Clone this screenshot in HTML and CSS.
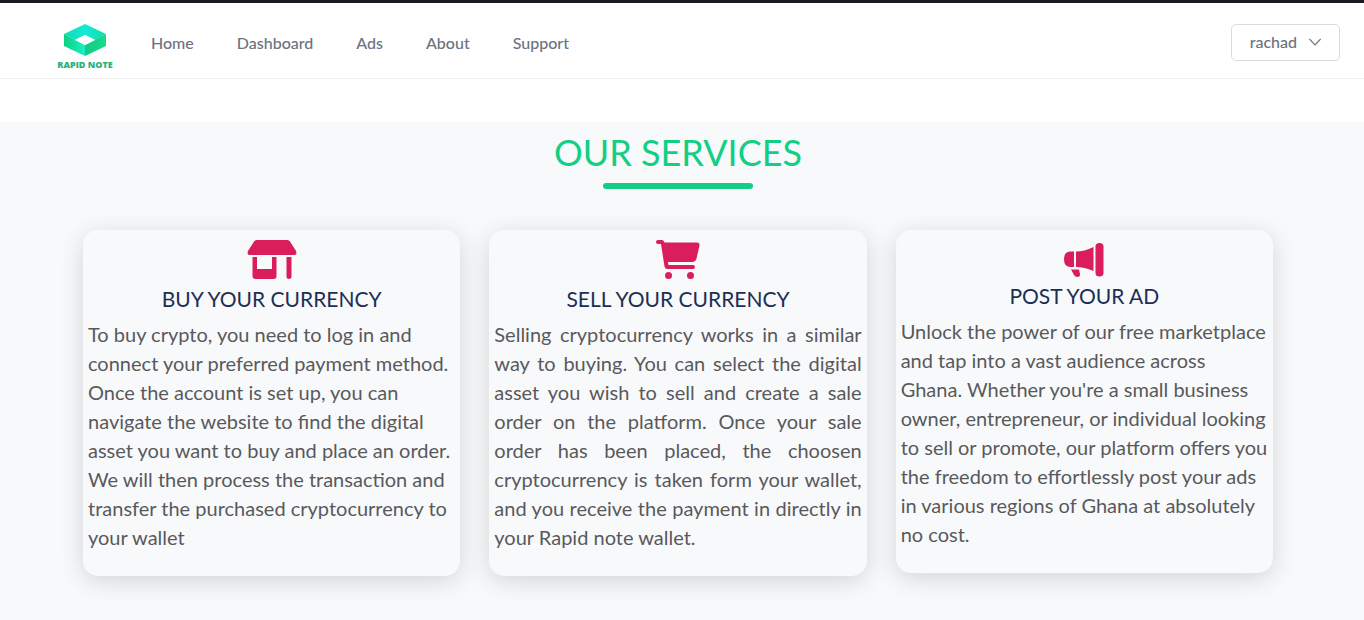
FILE: index.html
```html
<!DOCTYPE html>
<html lang="en">
<head>
<meta charset="utf-8">
<meta name="viewport" content="width=device-width, initial-scale=1">
<title>Rapid Note</title>
<link rel="stylesheet" href="styles.css">
</head>
<body>
<header class="nav">
  <a class="logo" href="#">
    <svg class="logo-mark" viewBox="0 0 42 32" aria-hidden="true">
      <defs>
        <linearGradient id="top" x1="0" y1="0" x2="1" y2="0"><stop offset="0" stop-color="#12dcb4"/><stop offset=".5" stop-color="#12ead8"/><stop offset="1" stop-color="#14dca8"/></linearGradient>
        <linearGradient id="left" x1="0" y1="0" x2="1" y2="0"><stop offset="0" stop-color="#0bd27e"/><stop offset="1" stop-color="#19f0c4"/></linearGradient>
        <linearGradient id="right" x1="0" y1="0" x2="1" y2="0"><stop offset="0" stop-color="#10c98a"/><stop offset="1" stop-color="#1bdc86"/></linearGradient>
      </defs>
      <path fill="url(#top)" d="M21 0 42 10 31 16 21 11 11 16 0 10Z"/>
      <path fill="url(#left)" d="M0 10 21 21V32L0 22Z"/>
      <path fill="url(#right)" d="M42 10 21 21V32L42 22Z"/>
      <path fill="#fff" d="M21 11 31 16 21 21 11 16Z"/>
    </svg>
    <span class="logo-name">RAPID NOTE</span>
  </a>
  <nav class="links">
    <a href="#">Home</a>
    <a href="#">Dashboard</a>
    <a href="#">Ads</a>
    <a href="#">About</a>
    <a href="#">Support</a>
  </nav>
  <button class="user" type="button">rachad
    <svg class="chevron" viewBox="0 0 12 8" aria-hidden="true"><path d="M.3 1 6 7 11.700 1" fill="none" stroke="currentColor" stroke-width="1.200"/></svg>
  </button>
</header>
<main class="services">
  <h1 class="title">OUR SERVICES</h1>
  <div class="cards">
    <article class="card">
      <svg class="icon" viewBox="0 0 50 40" aria-hidden="true"><path d="M9.500 0H40.500Q42 0 43 1.500L49 11Q50.500 15 46.500 15H3.500Q-.5 15 1 11L7 1.500Q8 0 9.500 0ZM5.500 17H10V29H25V17H29.500V36Q29.500 39 26.500 39H8.500Q5.500 39 5.500 36ZM39.500 17H44.500V37Q44.500 39 42 39T39.500 37Z"/></svg>
      <h2 class="card-title">BUY YOUR CURRENCY</h2>
      <p class="text">To buy crypto, you need to log in and connect your preferred payment method. Once the account is set up, you can navigate the website to find the digital asset you want to buy and place an order. We will then process the transaction and transfer the purchased cryptocurrency to your wallet</p>
    </article>
    <article class="card">
      <svg class="icon" viewBox="0 0 50 40" aria-hidden="true"><path d="M5 0H9Q11 0 11.500 2.500H44Q47 2.500 46.500 5.500L43.500 18.500Q42.500 22 39 22H15L15.500 25H40Q42 25 42 27T40 29H14.500Q12 29 11.500 26.500L8 4H5Q3 4 3 2T5 0Z"/><circle cx="15.500" cy="35.500" r="3.500"/><circle cx="37.500" cy="35.500" r="3.500"/></svg>
      <h2 class="card-title">SELL YOUR CURRENCY</h2>
      <p class="text justified">Selling cryptocurrency works in a similar way to buying. You can select the digital asset you wish to sell and create a sale order on the platform. Once your sale order has been placed, the choosen cryptocurrency is taken form your wallet, and you receive the payment in directly in your Rapid note wallet.</p>
    </article>
    <article class="card">
      <svg class="icon icon-small" viewBox="0 0 40 37" aria-hidden="true"><path d="M6.500 11.500H10V27H6.500Q0 27 0 19.250T6.500 11.500ZM12 11.500Q20 11.500 29.500 7V31Q20 27 12 27ZM31.500 6.500Q31.500 3 35.500 3T39.500 6.500V33Q39.500 36.500 35.500 36.500T31.500 33ZM7 29.500H15L16 34Q16.500 37 13.500 37 11 37 10 35Z"/></svg>
      <h2 class="card-title">POST YOUR AD</h2>
      <p class="text">Unlock the power of our free marketplace and tap into a vast audience across Ghana. Whether you're a small business owner, entrepreneur, or individual looking to sell or promote, our platform offers you the freedom to effortlessly post your ads in various regions of Ghana at absolutely no cost.</p>
    </article>
  </div>
</main>
</body>
</html>
```
FILE: styles.css
```css
* { box-sizing: border-box; }
html { min-height: 100%; background: #f8f9fb; }
body {
  margin: 0;
  border-top: 3px solid #1d1b22;
  font-family: Lato, "Liberation Sans", sans-serif;
}
.nav {
  display: flex;
  align-items: flex-start;
  height: 76px;
  padding: 21px 24px 0 57px;
  background: #fff;
  border-bottom: 1px solid #efefef;
}
.logo {
  display: flex;
  flex-direction: column;
  align-items: center;
  gap: 4px;
  width: 56px;
  text-decoration: none;
}
.logo-mark { width: 42px; height: 32px; }
.logo-name {
  font: 800 9px/10px "Open Sans", sans-serif;
  color: #28b17c;
  white-space: nowrap;
}
.links {
  display: flex;
  gap: 43px;
  margin-left: 38px;
  padding-top: 9px;
}
.links a {
  font-size: 16px;
  line-height: 20px;
  font-weight: 500;
  color: #6b7280;
  text-decoration: none;
}
.user {
  display: flex;
  align-items: center;
  gap: 12px;
  height: 37px;
  margin-left: auto;
  padding: 0 18px 2px;
  border: 1px solid #dcdcde;
  border-radius: 5px;
  background: #fff;
  color: #6b7280;
  font: 500 16px/20px Lato, sans-serif;
}
.chevron { width: 12px; height: 8px; }
.services {
  border-top: 43px solid #fff;
  padding: 8px 32px 44px 24px;
}
.title {
  display: flex;
  flex-direction: column;
  align-items: center;
  gap: 8px;
  margin: 0 0 41px;
  font-size: 36px;
  line-height: 45px;
  font-weight: 400;
  color: #12cf85;
}
.title::after {
  content: "";
  width: 150px;
  height: 6px;
  border-radius: 3px;
  background: #12cf85;
}
.cards {
  display: grid;
  grid-template-columns: repeat(3, 1fr);
  align-items: start;
  gap: 29px;
  max-width: 1190px;
  margin: 0 auto;
}
.card {
  display: flex;
  flex-direction: column;
  align-items: center;
  padding: 10px 5px 24px;
  border-radius: 15px;
  background: #f8f9fb;
  box-shadow: 0 5px 25px rgba(0, 0, 0, .15);
}
.icon { width: 50px; height: 40px; fill: #da1e5b; }
.icon-small { width: 40px; height: 37px; }
.card-title {
  margin: 5px 0 7px;
  font-size: 21px;
  line-height: 28px;
  font-weight: 400;
  color: #1c2f55;
}
.text {
  width: 100%;
  margin: 0;
  font-size: 20px;
  line-height: 29px;
  color: #58595b;
}
.justified { text-align: justify; }
```
